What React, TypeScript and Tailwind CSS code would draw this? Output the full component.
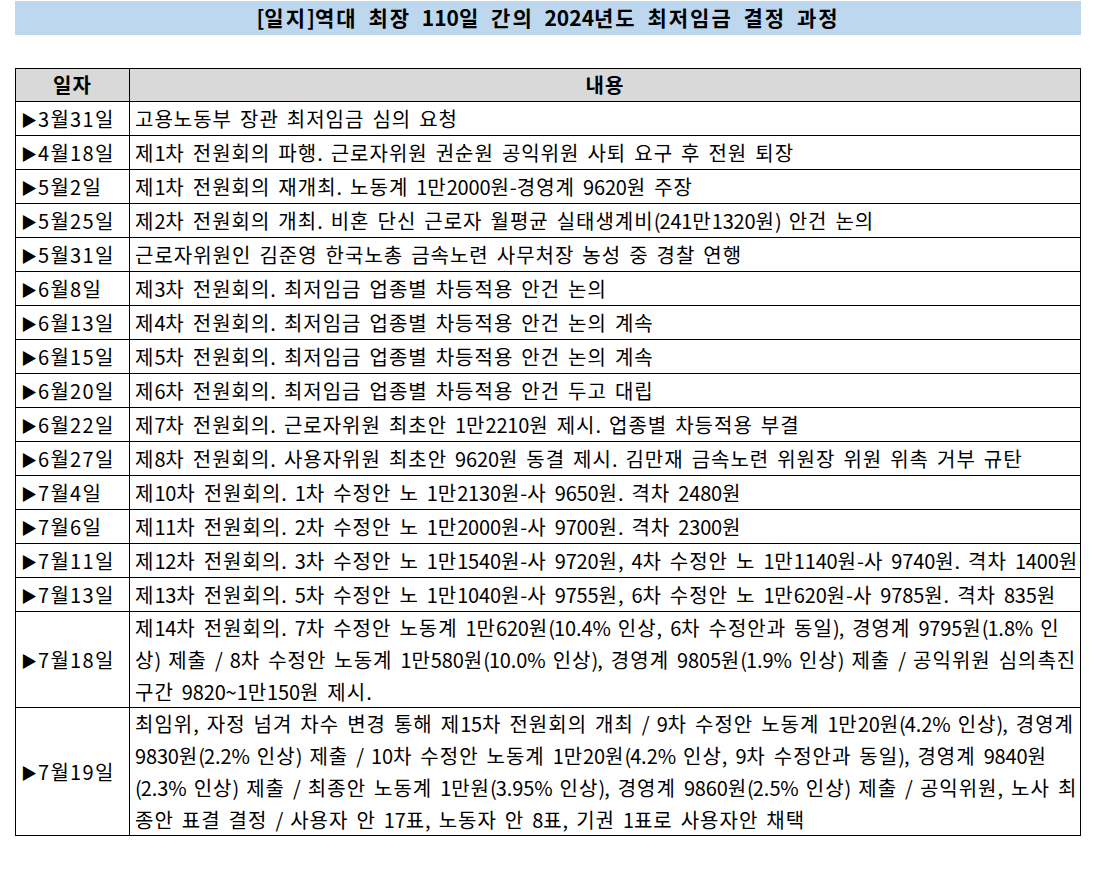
import React from "react";

type Row = { d: string; lines: string[] };

const rows: Row[] = [
  { d: "3월31일", lines: ["고용노동부 장관 최저임금 심의 요청"] },
  { d: "4월18일", lines: ["제1차 전원회의 파행. 근로자위원 권순원 공익위원 사퇴 요구 후 전원 퇴장"] },
  { d: "5월2일", lines: ["제1차 전원회의 재개최. 노동계 1만2000원-경영계 9620원 주장"] },
  { d: "5월25일", lines: ["제2차 전원회의 개최. 비혼 단신 근로자 월평균 실태생계비(241만1320원) 안건 논의"] },
  { d: "5월31일", lines: ["근로자위원인 김준영 한국노총 금속노련 사무처장 농성 중 경찰 연행"] },
  { d: "6월8일", lines: ["제3차 전원회의. 최저임금 업종별 차등적용 안건 논의"] },
  { d: "6월13일", lines: ["제4차 전원회의. 최저임금 업종별 차등적용 안건 논의 계속"] },
  { d: "6월15일", lines: ["제5차 전원회의. 최저임금 업종별 차등적용 안건 논의 계속"] },
  { d: "6월20일", lines: ["제6차 전원회의. 최저임금 업종별 차등적용 안건 두고 대립"] },
  { d: "6월22일", lines: ["제7차 전원회의. 근로자위원 최초안 1만2210원 제시. 업종별 차등적용 부결"] },
  { d: "6월27일", lines: ["제8차 전원회의. 사용자위원 최초안 9620원 동결 제시. 김만재 금속노련 위원장 위원 위촉 거부 규탄"] },
  { d: "7월4일", lines: ["제10차 전원회의. 1차 수정안 노 1만2130원-사 9650원. 격차 2480원"] },
  { d: "7월6일", lines: ["제11차 전원회의. 2차 수정안 노 1만2000원-사 9700원. 격차 2300원"] },
  { d: "7월11일", lines: ["제12차 전원회의. 3차 수정안 노 1만1540원-사 9720원, 4차 수정안 노 1만1140원-사 9740원. 격차 1400원"] },
  { d: "7월13일", lines: ["제13차 전원회의. 5차 수정안 노 1만1040원-사 9755원, 6차 수정안 노 1만620원-사 9785원. 격차 835원"] },
  {
    d: "7월18일",
    lines: [
      "제14차 전원회의. 7차 수정안 노동계 1만620원(10.4% 인상, 6차 수정안과 동일), 경영계 9795원(1.8% 인",
      "상) 제출 / 8차 수정안 노동계 1만580원(10.0% 인상), 경영계 9805원(1.9% 인상) 제출 / 공익위원 심의촉진",
      "구간 9820~1만150원 제시.",
    ],
  },
  {
    d: "7월19일",
    lines: [
      "최임위, 자정 넘겨 차수 변경 통해 제15차 전원회의 개최 / 9차 수정안 노동계 1만20원(4.2% 인상), 경영계",
      "9830원(2.2% 인상) 제출 / 10차 수정안 노동계 1만20원(4.2% 인상, 9차 수정안과 동일), 경영계 9840원",
      "(2.3% 인상) 제출 / 최종안 노동계 1만원(3.95% 인상), 경영계 9860원(2.5% 인상) 제출 / 공익위원, 노사 최",
      "종안 표결 결정 / 사용자 안 17표, 노동자 안 8표, 기권 1표로 사용자안 채택",
    ],
  },
];

const SPLIT = /([가-힣]+|[()%\/]+|[0-9]+)/;
const IS_HANGUL = /^[가-힣]+$/;
const IS_DIGIT = /^[0-9]+$/;

function K({ t }: { t: string }) {
  return (
    <>
      {t.split(SPLIT).map((p, i) => {
        if (i % 2 === 0) return <React.Fragment key={i}>{p}</React.Fragment>;
        if (IS_HANGUL.test(p))
          return (
            <span key={i} className="tracking-[1px]">
              {p}
            </span>
          );
        if (IS_DIGIT.test(p))
          return (
            <span key={i} className="tracking-[-0.15px]">
              {p}
            </span>
          );
        return (
          <span key={i} className="tracking-[-1px]">
            {p}
          </span>
        );
      })}
    </>
  );
}

function KT({ t }: { t: string }) {
  return (
    <>
      {t.split(/([가-힣]+)/).map((p, i) =>
        i % 2 === 1 ? (
          <span key={i} className="tracking-[2px]">
            {p}
          </span>
        ) : (
          <React.Fragment key={i}>{p}</React.Fragment>
        )
      )}
    </>
  );
}

export default function App() {
  return (
    <div
      className="w-[1094px] h-[871px] bg-white text-black"
      style={{ fontFamily: '"Noto Sans CJK KR", "Noto Sans", sans-serif' }}
    >
      <div className="pt-px pl-[15px]">
        <div className="w-[1066px] h-[34px] bg-[#bdd7ee] flex items-center justify-center text-[21px] font-bold [word-spacing:6px] whitespace-nowrap">
          <span>
            <KT t="[일지]역대 최장 110일 간의 2024년도 최저임금 결정 과정" />
          </span>
        </div>
      </div>
      <div className="mt-[33px] ml-[15px] w-[1066px] border border-black text-[20px] [word-spacing:3.5px]">
        <div className="flex h-[33px] bg-[#d9d9d9] font-bold border-b border-black">
          <div className="w-[114px] border-r border-black flex items-center justify-center">
            <span className="tracking-[1px]">일자</span>
          </div>
          <div className="flex-1 flex items-center justify-center">
            <span className="tracking-[1px]">내용</span>
          </div>
        </div>
        {rows.map((r, i) => (
          <div
            key={i}
            className={i < rows.length - 1 ? "flex border-b border-black" : "flex"}
          >
            <div className="w-[114px] shrink-0 border-r border-black flex items-center pl-[5px] whitespace-nowrap">
              <span className="text-[16px] mr-px">▶</span>
              <span className="tracking-[1.3px]">{r.d}</span>
            </div>
            <div
              className={
                r.lines.length === 1
                  ? "flex-1 pl-[5px] flex flex-col justify-center h-[33px]"
                  : r.lines.length === 3
                  ? "flex-1 pl-[5px] flex flex-col justify-center h-[95px]"
                  : "flex-1 pl-[5px] flex flex-col justify-center h-[127px]"
              }
            >
              {r.lines.map((l, j) => (
                <div key={j} className="whitespace-nowrap leading-[32px]">
                  <K t={l} />
                </div>
              ))}
            </div>
          </div>
        ))}
      </div>
    </div>
  );
}
